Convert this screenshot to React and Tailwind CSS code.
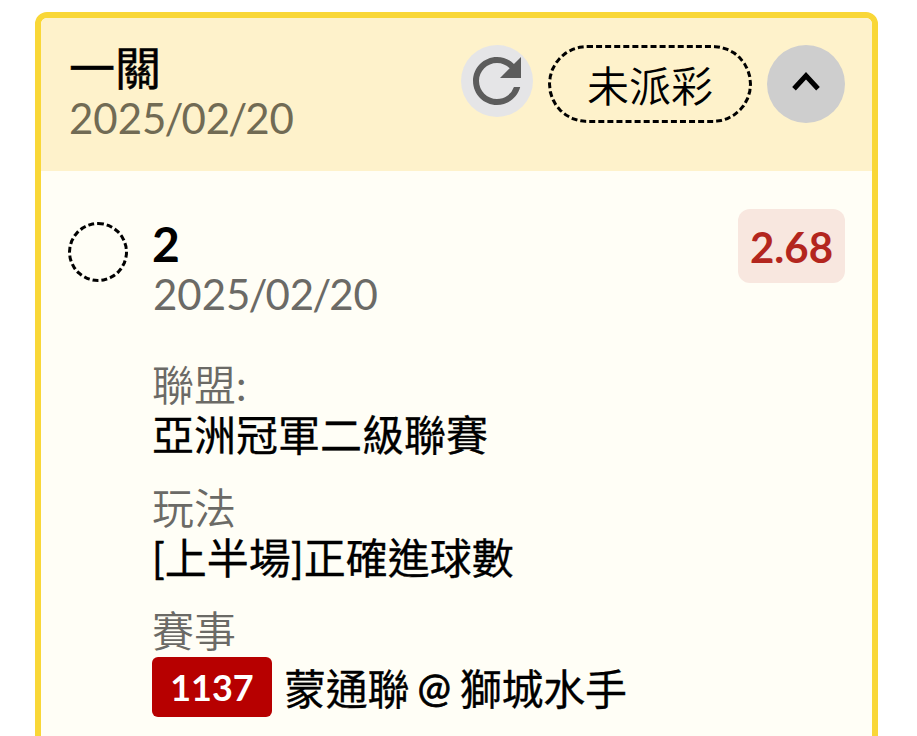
import React, { useState } from "react";
import { MdRefresh } from "react-icons/md";

const bet = {
  title: "一關",
  date: "2025/02/20",
  status: "未派彩",
  pick: "2",
  odds: "2.68",
  league: "亞洲冠軍二級聯賽",
  play: "[上半場]正確進球數",
  matchNo: "1137",
  away: "蒙通聯",
  home: "獅城水手",
};

// slashes sit tight against the digits
function DateText({ value }) {
  return value.split(/(\d\/)/).map((part, i) => (
    <span key={i} className={part.includes("/") ? "tracking-[-2px]" : ""}>
      {part}
    </span>
  ));
}

function Field({ label, children }) {
  return (
    <div className="mb-[23px]">
      <p className="h-[50px] text-[42px] leading-[50px] text-[#6b6a66]">
        {label}
      </p>
      <div className="text-[42px] leading-[50px] font-normal text-black [-webkit-text-stroke:0.3px_#000]">
        {children}
      </div>
    </div>
  );
}

export default function App() {
  const [open, setOpen] = useState(true);

  return (
    <div className="h-[736px] w-[917px] overflow-hidden bg-white pt-3 pl-[35px] font-['Lato','Noto_Sans_CJK_TC',sans-serif]">
      <div className="h-[760px] w-[843px] overflow-hidden rounded-xl border-[6px] border-[#f9d737] bg-[#fffef6]">
        <header className="flex h-[153px] items-start justify-between bg-[#fef2cb] pt-[25px] pr-[27px] pl-[28px]">
          <div>
            <h1 className="h-[50px] text-[46px] leading-[50px] font-normal text-black [-webkit-text-stroke:0.5px_#000]">
              {bet.title}
            </h1>
            <p className="text-[42px] leading-[50px] text-[#716b54]">
              <DateText value={bet.date} />
            </p>
          </div>
          <div className="mt-[2px] flex items-start">
            <button
              type="button"
              aria-label="refresh"
              className="flex size-[72px] items-center justify-center rounded-full bg-[#e5e5e7]"
            >
              <MdRefresh className="size-[72px] text-[#5c5c5c]" />
            </button>
            <span className="ml-[15px] flex h-[78px] w-[204px] items-center justify-center rounded-full border-[3px] border-dashed border-black pt-[4px] text-[42px] leading-none font-[350] text-black">
              {bet.status}
            </span>
            <button
              type="button"
              aria-label="toggle"
              onClick={() => setOpen(!open)}
              className="ml-[15px] flex size-[78px] items-center justify-center rounded-full bg-[#cecece]"
            >
              <svg viewBox="0 0 78 78" className="size-[78px]" fill="none">
                <path d="M27 43.7 39 30.7l12 13" stroke="#000" strokeWidth="5" />
              </svg>
            </button>
          </div>
        </header>

        {open && (
          <main className="flex items-start pt-[38px] pr-[27px] pl-[27px]">
            <span className="mt-[13px] size-[60px] rounded-full border-[3px] border-dashed border-black" />
            <div className="ml-6 flex-1">
              <h2 className="mt-[10px] h-[50px] text-[48px] leading-[50px] font-bold text-black">
                {bet.pick}
              </h2>
              <p className="mb-[41px] pl-px text-[42px] leading-[50px] text-[#6b6a66]">
                <DateText value={bet.date} />
              </p>
              <Field
                label={
                  <>
                    <span className="font-[350]">聯盟</span>:
                  </>
                }
              >
                {bet.league}
              </Field>
              <Field label={<span className="font-[350]">玩法</span>}>
                {bet.play}
              </Field>
              <Field label={<span className="font-[350]">賽事</span>}>
                <div className="flex items-center pt-px">
                  <span className="mr-3 flex h-[60px] w-[120px] items-center justify-center rounded-md bg-[#b70000] text-[36px] leading-none font-bold text-white [-webkit-text-stroke:0]">
                    {bet.matchNo}
                  </span>
                  <span className="flex pt-[4px] tracking-[-0.2px]">
                    {bet.away}
                    <span className="-mt-[2px] mr-[9px] ml-[8px] text-[40px] [-webkit-text-stroke:0.8px_#000]">
                      @
                    </span>
                    {bet.home}
                  </span>
                </div>
              </Field>
            </div>
            <span className="flex h-[74px] w-[107px] items-center justify-center rounded-xl bg-[#f8e7df] pt-px text-[42px] leading-none font-bold text-[#b3261e]">
              {bet.odds}
            </span>
          </main>
        )}
      </div>
    </div>
  );
}
